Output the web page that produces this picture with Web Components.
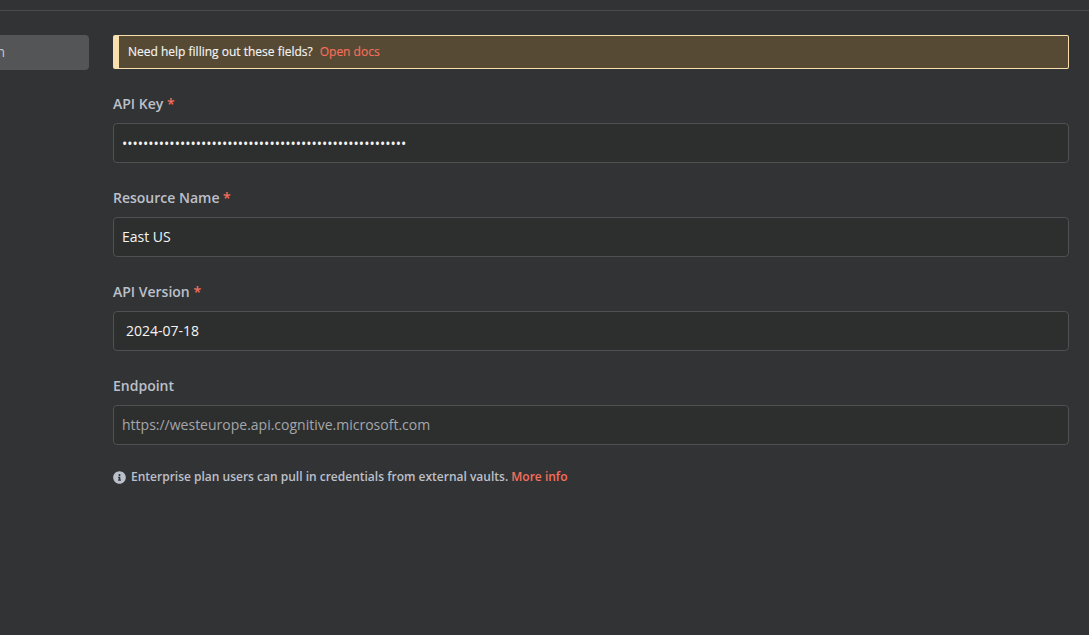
<!DOCTYPE html>
<html><head><meta charset="utf-8">
<style>
html,body{margin:0;padding:0;height:100%;background:#323335;overflow:hidden}
body{font-family:"Open Sans",sans-serif}
</style></head><body>
<template id="t-shell"><style>
:host{display:block;height:635px;box-sizing:border-box;color:#fff}
.top{height:10px;border-bottom:1px solid #4a4b4d}
.body{display:flex;gap:24px;padding:24px 20px 0 0}
.side{width:89px;flex:none;overflow:hidden}
.main{flex:1;min-width:0;display:flex;flex-direction:column}
</style><div class="top"></div><div class="body"><div class="side"><slot name="side"></slot></div><div class="main"><slot></slot></div></div></template>

<template id="t-nav"><style>
:host{display:block;width:140px;margin-left:-51px;height:35px;box-sizing:border-box;background:#545557;border-radius:4px;color:#c4c6cc;font-size:14px;line-height:34px;text-align:right}
span{display:block;padding-right:84px}
</style><span><slot></slot></span></template>

<template id="t-notice"><style>
:host{display:flex;align-items:center;height:34px;box-sizing:border-box;background:#574a35;border:1px solid #f9dfae;border-left:6px solid #f9dfae;border-radius:2px;padding:0 0 2px 9px;font-size:12px;font-weight:400;color:#f4f4f4;margin-bottom:25px;-webkit-text-stroke:.15px #f4f4f4}
::slotted(a){color:#f56f5b;margin-left:7px;text-decoration:none;-webkit-text-stroke:.15px #f56f5b}
</style><slot></slot></template>

<template id="t-field"><style>
:host{display:block;margin-bottom:25px}
label{display:block;font-size:14px;font-weight:600;line-height:20px;color:#bcc0ca;margin-bottom:9px}
i{font-style:normal;color:#f56f5b;}
.box{height:40px;box-sizing:border-box;background:#2d2f2e;border:1px solid #4f5052;border-radius:4px;padding:0 8px;font-size:14px;line-height:38px;color:#f4f4f4;white-space:nowrap;overflow:hidden}
:host([placeholder]) .box{color:#a4a6ac}
:host([indent]) .box{padding-left:12px}
:host([secret]) .box{line-height:40px}
</style><label><span id="l"></span><i id="r"></i></label><div class="box"><slot></slot></div></template>

<template id="t-foot"><style>
:host{display:flex;align-items:center;gap:5px;margin-top:-1px;font-size:12px;font-weight:600;line-height:16px;color:#bcc0ca}
svg{width:13px;height:13px;flex:none}
::slotted(a){color:#f56f5b;text-decoration:none}
</style><svg viewBox="0 0 512 512"><path fill="#bcc0ca" d="M256 8C119 8 8 119 8 256s111 248 248 248 248-111 248-248S393 8 256 8zm0 110a42 42 0 1 1 0 84 42 42 0 0 1 0-84zm56 254c0 7-5 12-12 12h-88c-7 0-12-5-12-12v-24c0-7 5-12 12-12h12v-64h-12c-7 0-12-5-12-12v-24c0-7 5-12 12-12h64c7 0 12 5 12 12v100h12c7 0 12 5 12 12z"/></svg><span><slot></slot></span></template>

<x-shell>
  <x-nav slot="side">n</x-nav>
  <x-notice>Need help filling out these fields?<a>Open docs</a></x-notice>
  <x-field label="API Key" required secret>••••••••••••••••••••••••••••••••••••••••••••••••••••••</x-field>
  <x-field label="Resource Name" required>East US</x-field>
  <x-field label="API Version" required indent>2024-07-18</x-field>
  <x-field label="Endpoint" placeholder>https://westeurope.api.cognitive.microsoft.com</x-field>
  <x-foot>Enterprise plan users can pull in credentials from external vaults. <a>More info</a></x-foot>
</x-shell>
<script>
function def(name,id,init){customElements.define(name,class extends HTMLElement{constructor(){super();this.attachShadow({mode:'open'}).appendChild(document.getElementById(id).content.cloneNode(true));}connectedCallback(){init&&init(this)}})}
def('x-shell','t-shell');def('x-nav','t-nav');def('x-notice','t-notice');def('x-foot','t-foot');
def('x-field','t-field',el=>{const s=el.shadowRoot;s.getElementById('l').textContent=el.getAttribute('label');if(el.hasAttribute('required'))s.getElementById('r').textContent=' *';});
</script>
</body></html>
